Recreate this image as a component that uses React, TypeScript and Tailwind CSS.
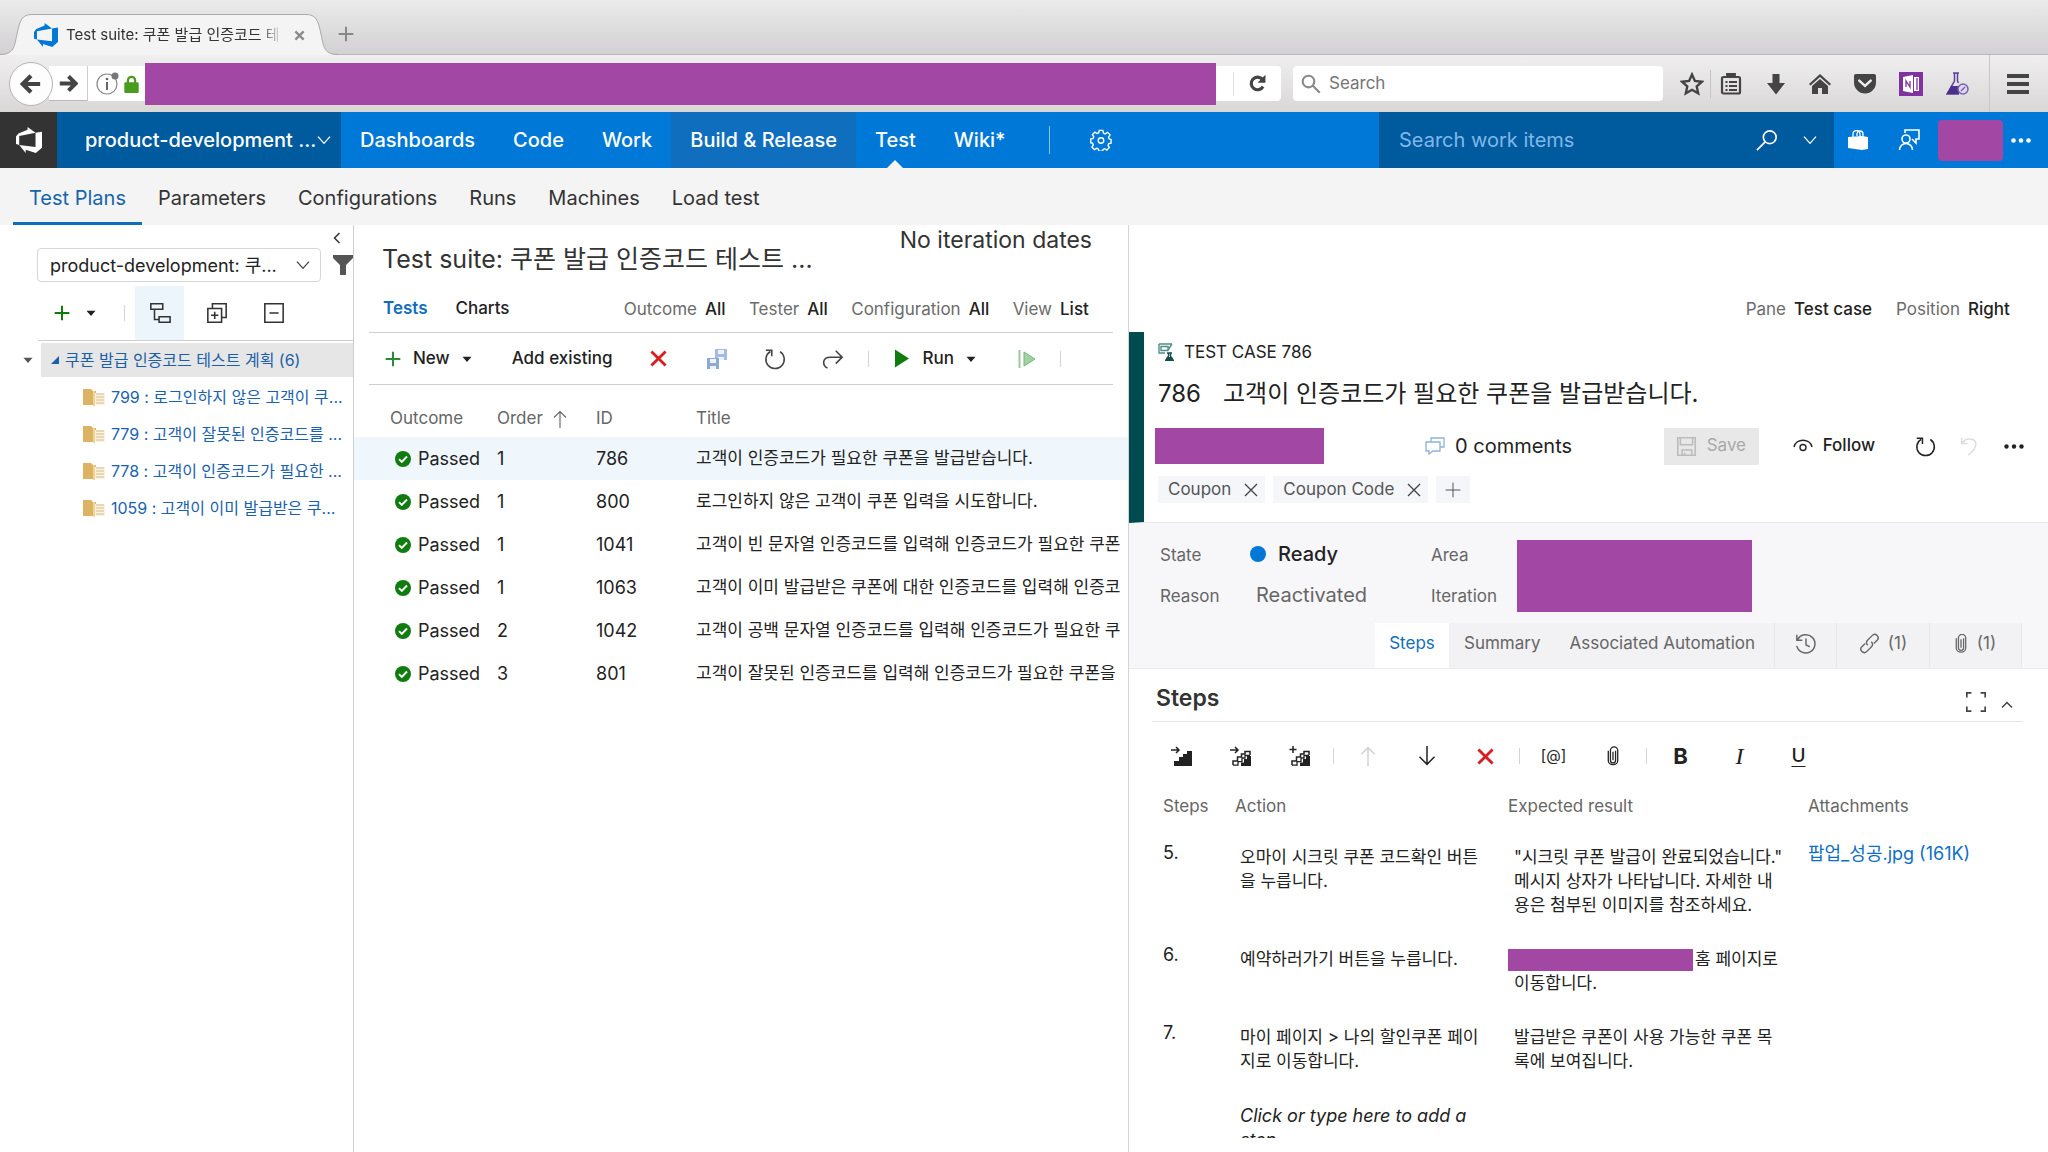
import type { ReactNode } from "react";

type IconProps = { className?: string };

type TestPoint = { id: number; order: number; title: string };

type TestStep = {
  no: number;
  action: string;
  expected: ReactNode;
  attachment?: string;
};

const HUB_GROUPS = ["Dashboards", "Code", "Work", "Build & Release", "Test", "Wiki*"];

const HUBS = ["Test Plans", "Parameters", "Configurations", "Runs", "Machines", "Load test"];

const SUITES = [
  "799 : 로그인하지 않은 고객이 쿠...",
  "779 : 고객이 잘못된 인증코드를 ...",
  "778 : 고객이 인증코드가 필요한 ...",
  "1059 : 고객이 이미 발급받은 쿠...",
];

const TEST_POINTS: TestPoint[] = [
  { id: 786, order: 1, title: "고객이 인증코드가 필요한 쿠폰을 발급받습니다." },
  { id: 800, order: 1, title: "로그인하지 않은 고객이 쿠폰 입력을 시도합니다." },
  { id: 1041, order: 1, title: "고객이 빈 문자열 인증코드를 입력해 인증코드가 필요한 쿠폰" },
  { id: 1063, order: 1, title: "고객이 이미 발급받은 쿠폰에 대한 인증코드를 입력해 인증코" },
  { id: 1042, order: 2, title: "고객이 공백 문자열 인증코드를 입력해 인증코드가 필요한 쿠" },
  { id: 801, order: 3, title: "고객이 잘못된 인증코드를 입력해 인증코드가 필요한 쿠폰을" },
];

const STEPS: TestStep[] = [
  {
    no: 5,
    action: "오마이 시크릿 쿠폰 코드확인 버튼\n을 누릅니다.",
    expected: '"시크릿 쿠폰 발급이 완료되었습니다."\n메시지 상자가 나타납니다. 자세한 내\n용은 첨부된 이미지를 참조하세요.',
    attachment: "팝업_성공.jpg (161K)",
  },
  {
    no: 6,
    action: "예약하러가기 버튼을 누릅니다.",
    expected: (
      <>
        <span className="-ml-1.5 mr-0.5 inline-block h-[22px] w-[185px] bg-[#a347a5] align-middle" />
        {"홈 페이지로\n이동합니다."}
      </>
    ),
  },
  {
    no: 7,
    action: "마이 페이지 > 나의 할인쿠폰 페이\n지로 이동합니다.",
    expected: "발급받은 쿠폰이 사용 가능한 쿠폰 목\n록에 보여집니다.",
  },
];

/* ---------- icons ---------- */

function Logo({ className }: IconProps) {
  return (
    <svg viewBox="0 0 24 24" fill="currentColor" className={className}>
      <path d="M0 8.877 2.247 5.91l8.405-3.416V.022l7.37 5.393L2.966 8.338v8.225L0 15.707zm24-4.45v14.651l-5.753 4.9-9.303-3.057v3.056l-5.978-7.416 15.057 1.798V5.415z" />
    </svg>
  );
}

function Line({ d, className, width = 1.5 }: IconProps & { d: string; width?: number }) {
  return (
    <svg viewBox="0 0 24 24" fill="none" stroke="currentColor" strokeWidth={width} className={className}>
      <path d={d} />
    </svg>
  );
}

const Chevron = ({ className }: IconProps) => <Line className={className} d="M3 7l9 10 9-10" width={2} />;
const Cross = ({ className }: IconProps) => <Line className={className} d="M3 3l18 18M21 3L3 21" width={2} />;
const RedCross = () => <Line className="size-[17px] text-[#d81e1e]" d="M2 2l20 20M22 2L2 22" width={4} />;
const Plus = ({ className }: IconProps) => <Line className={className} d="M12 1v22M1 12h22" width={3} />;

function Caret({ className }: IconProps) {
  return (
    <svg viewBox="0 0 12 8" fill="currentColor" className={className}>
      <path d="M0 1h12L6 8z" />
    </svg>
  );
}

function Refresh({ className }: IconProps) {
  return (
    <svg viewBox="0 0 24 24" fill="none" stroke="currentColor" strokeWidth="1.7" className={className}>
      <path d="M17.5 4A10 10 0 1 1 7 3.8M2 2.5h6.500V9" />
    </svg>
  );
}

function Paperclip({ className }: IconProps) {
  return (
    <svg viewBox="0 0 14 22" fill="none" stroke="currentColor" strokeWidth="1.5" className={className}>
      <path d="M10 5v11a3 3 0 0 1-6 0V4.500M1.500 5v11.500a5.500 4.500 0 0 0 11 0V4.500a4 4 0 0 0-8.500 0M7 6v10" />
    </svg>
  );
}

function Folder() {
  return (
    <svg viewBox="0 0 22 18" className="h-[18px] w-[22px] shrink-0">
      <path d="M0 1h8l2 2h3v14H0z" fill="#dcb265" />
      <path d="M11 5h11v12H11z" fill="#fbf3e0" />
      <path d="M13 6h8M13 9h8M13 12h8M13 15h8" stroke="#d8b98a" strokeWidth="1.2" />
      <path d="M11 3v15" stroke="#f2d392" strokeWidth="2" />
    </svg>
  );
}

function PassedIcon() {
  return (
    <svg viewBox="0 0 16 16" className="size-4 shrink-0">
      <circle cx="8" cy="8" r="8" fill="#107c10" />
      <path d="M4 8.200l2.800 2.800L12 5.500" fill="none" stroke="#fff" strokeWidth="1.900" />
    </svg>
  );
}

function Stairs({ variant }: { variant: "insert" | "shared" | "create" }) {
  return (
    <svg viewBox="0 0 21 20" className="h-5 w-[21px]">
      {variant === "create" ? (
        <path d="M4 0v7M.5 3.500h7" stroke="#222" strokeWidth="1.500" />
      ) : (
        <path d="M0 4h8M5 1l3 3-3 3" fill="none" stroke="#222" strokeWidth="1.500" />
      )}
      {variant === "insert" ? (
        <path d="M3 20v-5h5v-4h4V8h4V5h5v15z" fill="#222" />
      ) : (
        <>
          <path d="M3 19v-4h4.500v-4h4V8h3.500V5.500h5V9" fill="none" stroke="#222" strokeWidth="1.500" />
          <path d="M3 19.200h5v-3.500h4V12h3V9.500h5" fill="none" stroke="#222" strokeWidth="1.300" />
          <path d="M11 20v-3.500h3V13h3v-3h4v10z" fill="#222" />
        </>
      )}
    </svg>
  );
}

/* ---------- shared bits ---------- */

function IconButton({ label, className = "", children }: { label: string; className?: string; children: ReactNode }) {
  return (
    <button type="button" aria-label={label} className={`flex items-center justify-center ${className}`}>
      {children}
    </button>
  );
}

function Divider() {
  return <span className="mx-1 h-4 w-px bg-[#d4d4d4]" />;
}

function Filter({ label, value }: { label: string; value: string }) {
  return (
    <label className="flex items-center gap-2 text-[17px] text-[#6b6b6b]">
      {label}
      <select className="appearance-none font-medium text-[#222]">
        <option>{value}</option>
      </select>
    </label>
  );
}

/* ---------- browser window ---------- */

function TabStrip() {
  return (
    <div className="flex h-[55px] items-end border-b border-[#b9b7b9] bg-linear-to-b from-[#ebebeb] to-[#d3d1d3]">
      <div className="-mb-px flex h-[41px] items-stretch">
        <svg viewBox="0 0 32 41" className="w-8">
          <path d="M0 41C14 40 14 34 17 20S22 .5 32 .5V41z" fill="#f4f4f4" />
          <path d="M0 40.500C14 40 14 34 17 20S22 .5 32 .5" fill="none" stroke="#aaa" />
        </svg>
        <div className="flex w-[274px] items-center border-t border-[#aaa] bg-[#f4f4f4] text-[15px] text-[#333]">
          <Logo className="mr-2 ml-0.5 size-6 text-[#0078d7]" />
          <span className="w-[216px] overflow-hidden whitespace-nowrap mask-linear-[90deg] mask-linear-from-90% mask-linear-to-100%">
            Test suite: 쿠폰 발급 인증코드 테
          </span>
          <IconButton label="Close tab" className="ml-3 shrink-0 text-[#8a8a8a]">
            <Line className="size-[11px]" d="M3 3l18 18M21 3L3 21" width={5} />
          </IconButton>
        </div>
        <svg viewBox="0 0 32 41" className="w-8">
          <path d="M32 41C18 40 18 34 15 20S10 .5 0 .5V41z" fill="#f4f4f4" />
          <path d="M32 40.500C18 40 18 34 15 20S10 .5 0 .5" fill="none" stroke="#aaa" />
        </svg>
      </div>
      <IconButton label="New tab" className="mb-3 size-4 text-[#888]">
        <Plus className="size-4" />
      </IconButton>
    </div>
  );
}

function BrowserToolbar() {
  return (
    <div className="flex h-[57px] items-center bg-linear-to-b from-[#f0eff0] to-[#d9d7d6] text-[#444]">
      <IconButton label="Back" className="z-10 ml-[9px] size-[44px] rounded-full border border-[#b5b5b5] bg-[#fdfdfd]">
        <Line className="size-[22px]" d="M22 12H4M12 3l-9 9 9 9" width={4.5} />
      </IconButton>
      <IconButton label="Forward" className="-ml-1 h-[35px] w-[38px] border-b border-[#bbb] bg-white">
        <Line className="size-[19px]" d="M1 12h19M12 3l9 9-9 9" width={5} />
      </IconButton>
      <div className="flex h-[35px] min-w-0 flex-1 items-center rounded-r bg-white">
        <span className="flex h-full items-center gap-1 border-l border-[#ccc] pl-2">
          <svg viewBox="0 0 24 24" className="size-6">
            <circle cx="11" cy="12" r="10" fill="none" stroke="#888" strokeWidth="1.200" />
            <path d="M11 10v8" stroke="#666" strokeWidth="2" />
            <circle cx="11" cy="7" r="1.300" fill="#666" />
            <circle cx="19" cy="4" r="3.500" fill="#777" />
          </svg>
          <svg viewBox="0 0 16 20" className="h-[18px] w-[15px]">
            <path d="M4 9V6a4 4 0 0 1 8 0v3" fill="none" stroke="#4a9c1d" strokeWidth="2.500" />
            <rect y="8" width="16" height="12" rx="1.500" fill="#4a9c1d" />
          </svg>
        </span>
        <span className="ml-1.5 h-[42px] flex-1 bg-[#a347a5]" />
        <span className="ml-[17px] h-6 w-px bg-[#e0e0e0]" />
        <IconButton label="Reload" className="w-[47px]">
          <svg viewBox="0 0 24 24" className="size-[19px]" fill="none" stroke="currentColor" strokeWidth="4">
            <path d="M19 16a8 8 0 1 1-1-9.500" />
            <path d="M22 1v10H12z" fill="currentColor" stroke="none" />
          </svg>
        </IconButton>
      </div>
      <label className="ml-3 flex h-[35px] w-[370px] items-center rounded bg-white pl-2">
        <Line className="size-5 text-[#888]" d="M9 2a7 7 0 1 0 0 14 7 7 0 0 0 0-14zM14.500 14.500l8 8" width={2.5} />
        <input
          type="text"
          aria-label="Web search"
          placeholder="Search"
          className="ml-2 min-w-0 flex-1 text-[17px] outline-none placeholder:text-[#757575]"
        />
      </label>
      <IconButton label="Bookmark this page" className="ml-4 w-[26px]">
        <Line className="size-6" d="M12 2.500l2.900 6.400 7 .8-5.200 4.700 1.500 6.900L12 17.800l-6.200 3.500 1.500-6.900L2.100 9.700l7-.8z" width={2.4} />
      </IconButton>
      <span className="ml-[5px] h-7 w-px bg-[#c4c4c4]" />
      <IconButton label="Bookmarks" className="ml-2 w-6">
        <svg viewBox="0 0 22 22" className="size-[22px]" fill="none" stroke="currentColor" strokeWidth="2.200">
          <rect x="2" y="4" width="18" height="16.500" rx="1.500" />
          <path d="M7 3h8v-2H7zM5.500 9h2M9 9h8M5.500 13h2M9 13h8M5.500 17h2M9 17h8" strokeWidth="1.800" />
        </svg>
      </IconButton>
      <div className="ml-[22px] flex items-center gap-[22px]">
        <IconButton label="Downloads">
          <svg viewBox="0 0 22 22" className="size-[22px]" fill="currentColor">
            <path d="M7.500 1h7v9h5.500L11 21.500 2 10h5.500z" />
          </svg>
        </IconButton>
        <IconButton label="Home">
          <svg viewBox="0 0 22 22" className="size-[22px]" fill="currentColor">
            <path d="M11 1l11 10-1.500 1.500L11 4l-9.500 8.500L0 11z" />
            <path d="M11 6l8 7v8h-6v-6H9v6H3v-8z" />
          </svg>
        </IconButton>
        <IconButton label="Pocket">
          <svg viewBox="0 0 24 22" className="h-[21px] w-6">
            <path d="M2.500 1h19A2 2 0 0 1 23.500 3v7a11.500 11.500 0 0 1-23 0V3a2 2 0 0 1 2-2z" fill="currentColor" />
            <path d="M6 8l6 5.500L18 8" fill="none" stroke="#eee" strokeWidth="2.600" strokeLinecap="round" />
          </svg>
        </IconButton>
        <IconButton label="OneNote clipper">
          <svg viewBox="0 0 24 24" className="size-6">
            <path d="M0 0h24v24H0z" fill="#8033a0" />
            <path d="M4 5l10-2v18L4 19zM15 5h5v14h-5z" fill="#fff" />
            <path d="M7 15V9l4 6V9M18 6v12" fill="none" stroke="#8033a0" strokeWidth="1.300" />
          </svg>
        </IconButton>
        <IconButton label="Test assistant">
          <svg viewBox="0 0 24 24" className="size-6">
            <path d="M8 1h6M9.500 1v8L2 22h12M12.500 1v8l1 2" fill="none" stroke="#5b3f9a" strokeWidth="1.500" />
            <path d="M6 14h8v8H2z" fill="#4b2f8a" />
            <circle cx="18" cy="17" r="5" fill="#ded9ea" stroke="#7a5fb5" strokeWidth="1.500" />
            <path d="M16 19l4-4" stroke="#7a5fb5" strokeWidth="1.500" />
          </svg>
        </IconButton>
      </div>
      <span className="ml-5 h-full w-px bg-[#c8c8c8]" />
      <IconButton label="Open menu" className="mr-[18px] ml-4">
        <Line className="size-6" d="M1 4h22M1 12h22M1 20h22" width={4} />
      </IconButton>
    </div>
  );
}

/* ---------- product header ---------- */

function ProductHeader() {
  return (
    <header className="flex h-14 items-stretch bg-[#0078d7] text-white">
      <a href="#home" aria-label="Account home" className="flex w-[57px] items-center justify-center bg-[#333]">
        <Logo className="size-[26px]" />
      </a>
      <button type="button" className="flex w-[284px] items-center bg-[#005a9e] pl-7 text-[20px] font-medium whitespace-nowrap">
        product-development ...
        <Chevron className="size-4 shrink-0" />
      </button>
      <nav className="flex text-[20px] font-medium">
        {HUB_GROUPS.map((name) => (
          <a
            key={name}
            href="#hub"
            className={`relative flex items-center px-[19px] ${name === "Build & Release" ? "bg-[#106ebe]" : ""}`}
          >
            {name}
            {name === "Test" && (
              <span className="absolute bottom-0 left-1/2 -translate-x-1/2 border-x-8 border-b-8 border-x-transparent border-b-[#f4f4f4]" />
            )}
          </a>
        ))}
      </nav>
      <span className="ml-6 h-7 w-px self-center bg-[#8cc2ee]" />
      <IconButton label="Settings" className="ml-10">
        <svg viewBox="0 0 24 24" className="size-[22px]" fill="none" stroke="currentColor" strokeWidth="1.500">
          <path d="M10 1.500h4l.6 3 1.900.8 2.600-1.700 2.800 2.800-1.700 2.600.8 1.900 2 .5v4l-2.500.6-.8 1.900 1.500 2.300-2.800 2.800-2.300-1.500-1.900.8-.5 2h-4l-.6-2.500-1.900-.8-2.300 1.500-2.800-2.800 1.500-2.300-.8-1.900-2-.5v-4l2.500-.6.8-1.900-1.500-2.300 2.800-2.800 2.300 1.500 1.900-.8z" />
          <circle cx="12" cy="12.500" r="3" />
        </svg>
      </IconButton>
      <label className="ml-auto flex w-[455px] items-center bg-[#005a9e] pl-5">
        <input
          type="text"
          aria-label="Search work items"
          placeholder="Search work items"
          className="min-w-0 flex-1 text-[20px] outline-none placeholder:text-[#7fb8e8]"
        />
        <Line className="size-[22px]" d="M15 2a7 7 0 1 0 0 14 7 7 0 0 0 0-14zM10 14l-9 9" width={1.8} />
        <Chevron className="mr-4 ml-6 size-4" />
      </label>
      <IconButton label="Marketplace" className="ml-3.5">
        <svg viewBox="0 0 20 20" className="size-5" fill="currentColor">
          <path d="M0 7l14-1 6 1v12l-6 1-14-2z" />
          <path d="M5 7V4a3.500 3.500 0 0 1 7 0v3M9 6V4a3 3 0 0 1 6 0v3" fill="none" stroke="currentColor" strokeWidth="1.300" />
        </svg>
      </IconButton>
      <IconButton label="Feedback" className="ml-[30px]">
        <svg viewBox="0 0 22 22" className="size-[22px]" fill="none" stroke="currentColor" strokeWidth="1.600">
          <circle cx="8" cy="10" r="4" />
          <path d="M1.500 21a6.500 6.500 0 0 1 13 0M7 4V1h14v9h-3v4l-4-4" />
        </svg>
      </IconButton>
      <span className="ml-[18px] h-[41px] w-[65px] self-center rounded-sm bg-[#a347a5]" />
      <IconButton label="More" className="mr-[17px] ml-2">
        <svg viewBox="0 0 20 5" className="w-5" fill="currentColor">
          <circle cx="2.500" cy="2.500" r="2.300" />
          <circle cx="10" cy="2.500" r="2.300" />
          <circle cx="17.500" cy="2.500" r="2.300" />
        </svg>
      </IconButton>
    </header>
  );
}

function HubBar() {
  return (
    <nav className="flex h-[57px] items-stretch bg-[#f4f4f4] pl-[13px] text-[20px] text-[#333]">
      {HUBS.map((name, i) => (
        <a
          key={name}
          href="#tab"
          className={`flex items-center border-b-[3px] px-4 pt-1.5 ${i === 0 ? "border-[#106ebe] text-[#1565ad]" : "border-transparent"}`}
        >
          {name}
        </a>
      ))}
    </nav>
  );
}

/* ---------- test plan tree ---------- */

function PlanTree() {
  return (
    <aside className="min-w-0 overflow-hidden border-r border-[#cfcfcf]">
      <div className="flex h-[23px] items-end justify-end pr-2.5">
        <IconButton label="Collapse pane">
          <Line className="mb-1 size-3 text-[#333]" d="M17 2L7 12l10 10" width={3} />
        </IconButton>
      </div>
      <div className="flex items-center">
        <label className="relative ml-[37px] flex w-[284px] items-center">
          <select
            aria-label="Test plan"
            className="h-[34px] w-full appearance-none rounded-sm border border-[#d6d6d6] bg-white pl-3 text-[18px] text-[#222]"
          >
            <option>product-development: 쿠...</option>
          </select>
          <Chevron className="pointer-events-none absolute right-2.5 size-4 text-[#444]" />
        </label>
        <IconButton label="Filter" className="ml-3">
          <svg viewBox="0 0 20 20" className="size-5" fill="#555">
            <path d="M0 0h20v3l-7 7v10H7V10L0 3z" />
          </svg>
        </IconButton>
      </div>
      <div className="mt-1 ml-[38px] flex h-[55px] items-center border-b border-[#cfcfcf]">
        <IconButton label="New suite" className="ml-4 gap-4 text-[#222]">
          <Plus className="size-4 text-[#107c10]" />
          <Caret className="h-1.5 w-2.5" />
        </IconButton>
        <span className="ml-6 flex">
          <Divider />
        </span>
        <IconButton label="Show child suites" className="ml-1.5 h-full w-[49px] bg-[#edf5fc] text-[#333]">
          <Line className="size-[22px]" d="M2 2h13v6H2zM11 16h12v6H11zM6 8v11h5" width={1.7} />
        </IconButton>
        <IconButton label="Expand all" className="ml-[22px] text-[#333]">
          <Line className="size-[22px]" d="M2 7h15v15H2zM7 7V2h15v15h-5M9.500 10.500v8M5.500 14.500h8" width={1.7} />
        </IconButton>
        <IconButton label="Collapse all" className="ml-[35px] text-[#333]">
          <Line className="size-[22px]" d="M2 2h20v20H2zM7 12h10" width={1.7} />
        </IconButton>
      </div>
      <div className="mt-0.5 flex h-[34px] items-center">
        <Caret className="ml-[23px] h-1.5 w-2.5 text-[#555]" />
        <a href="#plan" className="ml-2 flex h-full flex-1 items-center bg-[#e6e6e6] pl-2.5 text-[16px] whitespace-nowrap text-[#1a5fa8]">
          <svg viewBox="0 0 8 8" className="mr-1.5 size-2" fill="currentColor">
            <path d="M8 0v8H0z" />
          </svg>
          쿠폰 발급 인증코드 테스트 계획 (6)
        </a>
      </div>
      <ul>
        {SUITES.map((name) => (
          <li key={name}>
            <a href="#suite" className="flex h-[37px] items-center gap-1.5 pt-0.5 pl-[83px] text-[16px] whitespace-nowrap text-[#1a62b0]">
              <Folder />
              {name}
            </a>
          </li>
        ))}
      </ul>
    </aside>
  );
}

/* ---------- test list ---------- */

function TestList() {
  return (
    <section className="min-w-0 overflow-hidden border-r border-[#d4d4d4]">
      <div className="flex h-[60px] items-start justify-between pr-9 pl-7 whitespace-nowrap text-[#333]">
        <h1 className="pt-4 text-[25px]">Test suite: 쿠폰 발급 인증코드 테스트 ...</h1>
        <p className="text-[23px] leading-[30px]">No iteration dates</p>
      </div>
      <div className="mx-[15px] flex h-[48px] items-center border-b border-[#cfcfcf] pr-6 pl-3.5 text-[17px] text-[#222]">
        <a href="#tests" className="font-semibold text-[#106ebe]">Tests</a>
        <a href="#charts" className="ml-7 font-medium">Charts</a>
        <div className="ml-auto flex gap-[23px] pt-0.5">
          <Filter label="Outcome" value="All" />
          <Filter label="Tester" value="All" />
          <Filter label="Configuration" value="All" />
          <Filter label="View" value="List" />
        </div>
      </div>
      <div className="mx-[15px] flex h-[52px] items-center border-b border-[#cfcfcf] pl-4 text-[17px] font-medium text-[#222]">
        <button type="button" className="flex items-center">
          <Plus className="mr-3 size-4 text-[#2d8a3a]" />
          New
          <Caret className="ml-3 h-1.5 w-2.5" />
        </button>
        <button type="button" className="ml-10">Add existing</button>
        <IconButton label="Remove" className="ml-[37px]">
          <RedCross />
        </IconButton>
        <IconButton label="Save order" className="ml-[39px]">
          <svg viewBox="0 0 22 22" className="size-[22px]">
            <path d="M9 1h12v11H9z" fill="#a3bce0" />
            <path d="M12 2h6v4h-6zM12 9h6v3h-6z" fill="#eef3fb" />
            <path d="M1 10h12v11H1z" fill="#8fa9d6" />
            <path d="M4 11h6v4H4zM4 18h6v3H4z" fill="#eef3fb" />
          </svg>
        </IconButton>
        <IconButton label="Refresh" className="ml-9 text-[#444]">
          <Refresh className="size-[22px]" />
        </IconButton>
        <IconButton label="Export" className="ml-9 text-[#444]">
          <Line className="size-[22px]" d="M6 22c-6-3-6-12 3-12h13M15 3l7 7-7 7" width={1.7} />
        </IconButton>
        <span className="ml-5 flex">
          <Divider />
        </span>
        <button type="button" className="ml-[22px] flex items-center">
          <svg viewBox="0 0 14 18" className="mr-3.5 h-[19px] w-3.5" fill="#107c10">
            <path d="M0 0l14 9-14 9z" />
          </svg>
          Run
          <Caret className="ml-3 h-1.5 w-2.5" />
        </button>
        <IconButton label="Resume run" className="ml-[42px]">
          <svg viewBox="0 0 18 18" className="size-[18px]">
            <path d="M1.500 0v18" stroke="#9cc9a0" strokeWidth="2" />
            <path d="M6 2l11 7-11 7z" fill="#9fd3a3" stroke="#77b67c" />
          </svg>
        </IconButton>
        <span className="ml-5 flex">
          <Divider />
        </span>
      </div>
      <table className="w-full table-fixed text-left text-[18px] whitespace-nowrap text-[#222]">
        <thead>
          <tr className="h-[52px] text-[17px] text-[#666]">
            <th className="w-[143px] pt-4 pl-9 font-normal">Outcome</th>
            <th className="w-[99px] pt-4 font-normal">
              <span className="flex items-center gap-2">
                Order
                <Line className="size-[18px]" d="M12 24V2M4 10l8-8 8 8" width={1.5} />
              </span>
            </th>
            <th className="w-[100px] pt-4 font-normal">ID</th>
            <th className="pt-4 font-normal">Title</th>
          </tr>
        </thead>
        <tbody>
          {TEST_POINTS.map((point, i) => (
            <tr key={point.id} className={`h-[43px] ${i === 0 ? "bg-[#eff6fc]" : ""}`}>
              <td className="pl-[41px]">
                <span className="flex items-center gap-[7px]">
                  <PassedIcon />
                  Passed
                </span>
              </td>
              <td>{point.order}</td>
              <td>{point.id}</td>
              <td className="overflow-hidden text-[17px]">{point.title}</td>
            </tr>
          ))}
        </tbody>
      </table>
    </section>
  );
}

/* ---------- work item form ---------- */

function Tag({ name }: { name: string }) {
  return (
    <span className="flex h-[27px] items-center bg-[#f4f6fa] pr-1.5 pl-2.5">
      {name}
      <IconButton label={`Remove ${name}`} className="ml-3 text-[#444]">
        <Cross className="size-4" />
      </IconButton>
    </span>
  );
}

function CaseHeader() {
  return (
    <div className="h-[191px] shrink-0 border-b border-l-[15px] border-b-[#e8e8ec] border-l-[#004b50] pr-[22px] pl-3.5 text-[#222]">
      <div className="flex items-center gap-2.5 pt-2 text-[17px] leading-6">
        <svg viewBox="0 0 16 18" className="h-[18px] w-4">
          <path d="M1 1h13M1 1v9h6M3 3.500h7v4H3zM14 1l-4 6" fill="none" stroke="#4f8f88" strokeWidth="1.400" />
          <path d="M9 10h5M10.500 10v3L8 17h7l-2.500-4v-3" fill="none" stroke="#124f48" strokeWidth="1.400" />
          <path d="M9 14h5l2 4H7z" fill="#124f48" />
        </svg>
        TEST CASE 786
      </div>
      <h2 className="mt-3 flex gap-[22px] text-[24px] leading-9 whitespace-nowrap">
        <span>786</span>
        <span>고객이 인증코드가 필요한 쿠폰을 발급받습니다.</span>
      </h2>
      <div className="mt-4 flex h-9 items-center text-[17px]">
        <span className="-ml-[3px] h-9 w-[169px] bg-[#a347a5]" />
        <button type="button" className="ml-[101px] flex items-center gap-2.5 text-[20px]">
          <svg viewBox="0 0 20 18" className="h-[18px] w-5" fill="none" stroke="#8fb3d6" strokeWidth="1.300">
            <path d="M6 5V1h13v9h-4" />
            <path d="M1 5h14v9H8l-4 3v-3H1z" />
          </svg>
          0 comments
        </button>
        <button type="button" disabled className="ml-auto flex h-[37px] w-[95px] items-center gap-2.5 bg-[#e8e8e8] pl-3 text-[#a8a8a8]">
          <Line className="size-[21px] text-[#bcbcbc]" d="M2 2h20v20H2zM5 2v8h14V2M7 22v-6h11v6M10 19v3" width={1.800} />
          Save
        </button>
        <button type="button" className="ml-[34px] flex items-center gap-2.5 font-medium">
          <svg viewBox="0 0 20 16" className="h-4 w-5" fill="none" stroke="currentColor" strokeWidth="1.400">
            <path d="M1 9C3 0 17 0 19 9" />
            <circle cx="10" cy="9.500" r="3" />
          </svg>
          Follow
        </button>
        <IconButton label="Refresh" className="ml-10">
          <Refresh className="size-[21px]" />
        </IconButton>
        <IconButton label="Undo" className="ml-6 text-[#dcdcdc]">
          <Line className="size-5" d="M2 2v7h7M2 9c5-8 17-7 17 1 0 6-5 9-9 13" width={1.800} />
        </IconButton>
        <IconButton label="More actions" className="mr-0.5 ml-6">
          <svg viewBox="0 0 20 5" className="w-5" fill="currentColor">
            <circle cx="2.500" cy="2.500" r="2.200" />
            <circle cx="10" cy="2.500" r="2.200" />
            <circle cx="17.500" cy="2.500" r="2.200" />
          </svg>
        </IconButton>
      </div>
      <div className="mt-3 flex gap-2 text-[17px] text-[#555]">
        <Tag name="Coupon" />
        <Tag name="Coupon Code" />
        <IconButton label="Add tag" className="h-[27px] w-[34px] bg-[#f4f6fa]">
          <Line className="size-4" d="M12 1v22M1 12h22" width={1.5} />
        </IconButton>
      </div>
    </div>
  );
}

function CaseFields() {
  return (
    <div className="shrink-0 border-b border-[#ececee] bg-[#f7f6f9] text-[17px] text-[#666]">
      <div className="flex h-[100px] pt-[17px] pl-[31px]">
        <dl className="grid h-[82px] w-[271px] grid-cols-[96px_1fr] grid-rows-[32px_50px] items-center">
          <dt>State</dt>
          <dd className="flex items-center gap-3 pb-1 text-[20px] font-medium text-[#222]">
            <span className="-ml-1.5 size-4 rounded-full bg-[#0078d7]" />
            Ready
          </dd>
          <dt>Reason</dt>
          <dd className="pb-1 text-[20px]">Reactivated</dd>
        </dl>
        <dl className="grid h-[82px] grid-cols-[86px_235px] grid-rows-[32px_50px] items-center">
          <dt>Area</dt>
          <dd className="row-span-2 h-[72px] self-start bg-[#a347a5]" />
          <dt>Iteration</dt>
        </dl>
      </div>
      <div className="mr-[26px] ml-[246px] flex h-[45px] items-stretch bg-[#f2f1f3] whitespace-nowrap">
        <button type="button" className="w-[74px] bg-white pb-1 text-[#106ebe]">Steps</button>
        <button type="button" className="ml-[15px] pb-1">Summary</button>
        <button type="button" className="ml-[29px] pb-1">Associated Automation</button>
        <span className="ml-auto flex">
          <IconButton label="History" className="w-[62px] border-l border-[#e8e7ea] pb-1">
            <Line className="size-[22px]" d="M3 7a10 10 0 1 1-1 7M2 2v6h6M12 6v7l4 2" width={1.600} />
          </IconButton>
          <button
            type="button"
            aria-label="Links (1)"
            className="flex w-[93px] items-center justify-center gap-2 border-l border-[#e8e7ea] pb-1"
          >
            <Line className="size-[21px]" d="M10 14c-2-2-2-4 0-6l5-5c4-4 9 2 6 5l-4 4M14 10c2 2 2 4 0 6l-5 5c-4 4-9-2-6-5l4-4" width={1.600} />
            (1)
          </button>
          <button
            type="button"
            aria-label="Attachments (1)"
            className="flex w-[93px] items-center justify-center gap-2.5 border-x border-[#e8e7ea] pb-1"
          >
            <Paperclip className="h-[19px] w-3" />
            (1)
          </button>
        </span>
      </div>
    </div>
  );
}

function StepsToolbar() {
  const button = "w-[59px]";
  return (
    <div className="flex h-[68px] items-center text-[#222]">
      <IconButton label="Insert step" className={button}><Stairs variant="insert" /></IconButton>
      <IconButton label="Insert shared steps" className={button}><Stairs variant="shared" /></IconButton>
      <IconButton label="Create shared steps" className={button}><Stairs variant="create" /></IconButton>
      <Divider />
      <IconButton label="Move up" className={`${button} text-[#d4d4d4]`}>
        <Line className="size-5" d="M12 24V2M4 10l8-8 8 8" width={1.800} />
      </IconButton>
      <IconButton label="Move down" className={button}>
        <Line className="size-5" d="M12 0v22M3 13l9 9 9-9" width={1.800} />
      </IconButton>
      <IconButton label="Delete step" className={button}><RedCross /></IconButton>
      <Divider />
      <IconButton label="Insert parameter" className={`${button} text-[15px]`}>[@]</IconButton>
      <IconButton label="Add attachment" className={button}><Paperclip className="h-5 w-3" /></IconButton>
      <Divider />
      <IconButton label="Bold" className={`${button} text-[22px] font-bold`}>B</IconButton>
      <IconButton label="Italic" className={`${button} font-['Liberation_Serif',serif] text-[24px] italic`}>I</IconButton>
      <IconButton label="Underline" className={`${button} text-[19px] font-medium underline underline-offset-4`}>U</IconButton>
    </div>
  );
}

function TestCase() {
  return (
    <section className="flex min-h-0 min-w-0 flex-col overflow-hidden">
      <div className="flex h-[107px] shrink-0 items-end justify-end gap-[23px] pr-[38px] pb-2.5">
        <Filter label="Pane" value="Test case" />
        <Filter label="Position" value="Right" />
      </div>
      <CaseHeader />
      <CaseFields />
      <div className="mr-[25px] ml-[23px] flex h-[53px] shrink-0 items-center border-b border-[#e4e4e6] pl-1">
        <h3 className="mr-auto pt-1.5 text-[23px] font-semibold text-[#333]">Steps</h3>
        <IconButton label="Full screen" className="pt-3.5 text-[#444]">
          <Line className="size-[22px]" d="M2 7V2h5M17 2h5v5M22 17v5h-5M7 22H2v-5" width={1.800} />
        </IconButton>
        <IconButton label="Collapse" className="mr-2.5 ml-3.5 pt-5 text-[#444]">
          <Line className="size-3" d="M2 17L12 7l10 10" width={3} />
        </IconButton>
      </div>
      <div className="pl-[23px]">
        <StepsToolbar />
      </div>
      <div className="mb-3.5 min-h-0 flex-1 overflow-hidden pl-[23px]">
        <table className="w-full table-fixed text-left text-[17px] leading-6 text-[#222]">
          <thead>
            <tr className="h-[32px] text-[#666]">
              <th className="w-[83px] pl-[11px] font-normal">Steps</th>
              <th className="w-[273px] font-normal">Action</th>
              <th className="w-[300px] font-normal">Expected result</th>
              <th className="font-normal">Attachments</th>
            </tr>
          </thead>
          <tbody className="align-top">
            {STEPS.map((step) => (
              <tr key={step.no}>
                <td className="pt-[19px] pb-[11px] pl-[11px] text-[18px]">{step.no}.</td>
                <td className="pt-[23px] pb-[7px] pl-[5px] whitespace-pre">{step.action}</td>
                <td className="pt-[23px] pb-[7px] pl-1.5 whitespace-pre">{step.expected}</td>
                <td className="pt-5 text-[18px]">
                  {step.attachment && <a href="#attachment" className="text-[#0f6fc6]">{step.attachment}</a>}
                </td>
              </tr>
            ))}
            <tr>
              <td />
              <td className="pt-6 pl-[5px]">
                <button type="button" className="w-[240px] text-left text-[18px] italic">
                  Click or type here to add a step
                </button>
              </td>
            </tr>
          </tbody>
        </table>
      </div>
    </section>
  );
}

export default function App() {
  return (
    <div className="flex h-screen flex-col overflow-hidden bg-white font-[Inter,'Noto_Sans_CJK_KR',sans-serif]">
      <TabStrip />
      <BrowserToolbar />
      <ProductHeader />
      <HubBar />
      <main className="grid min-h-0 flex-1 grid-cols-[354px_minmax(0,775fr)_minmax(0,919fr)] grid-rows-[minmax(0,1fr)]">
        <PlanTree />
        <TestList />
        <TestCase />
      </main>
    </div>
  );
}
